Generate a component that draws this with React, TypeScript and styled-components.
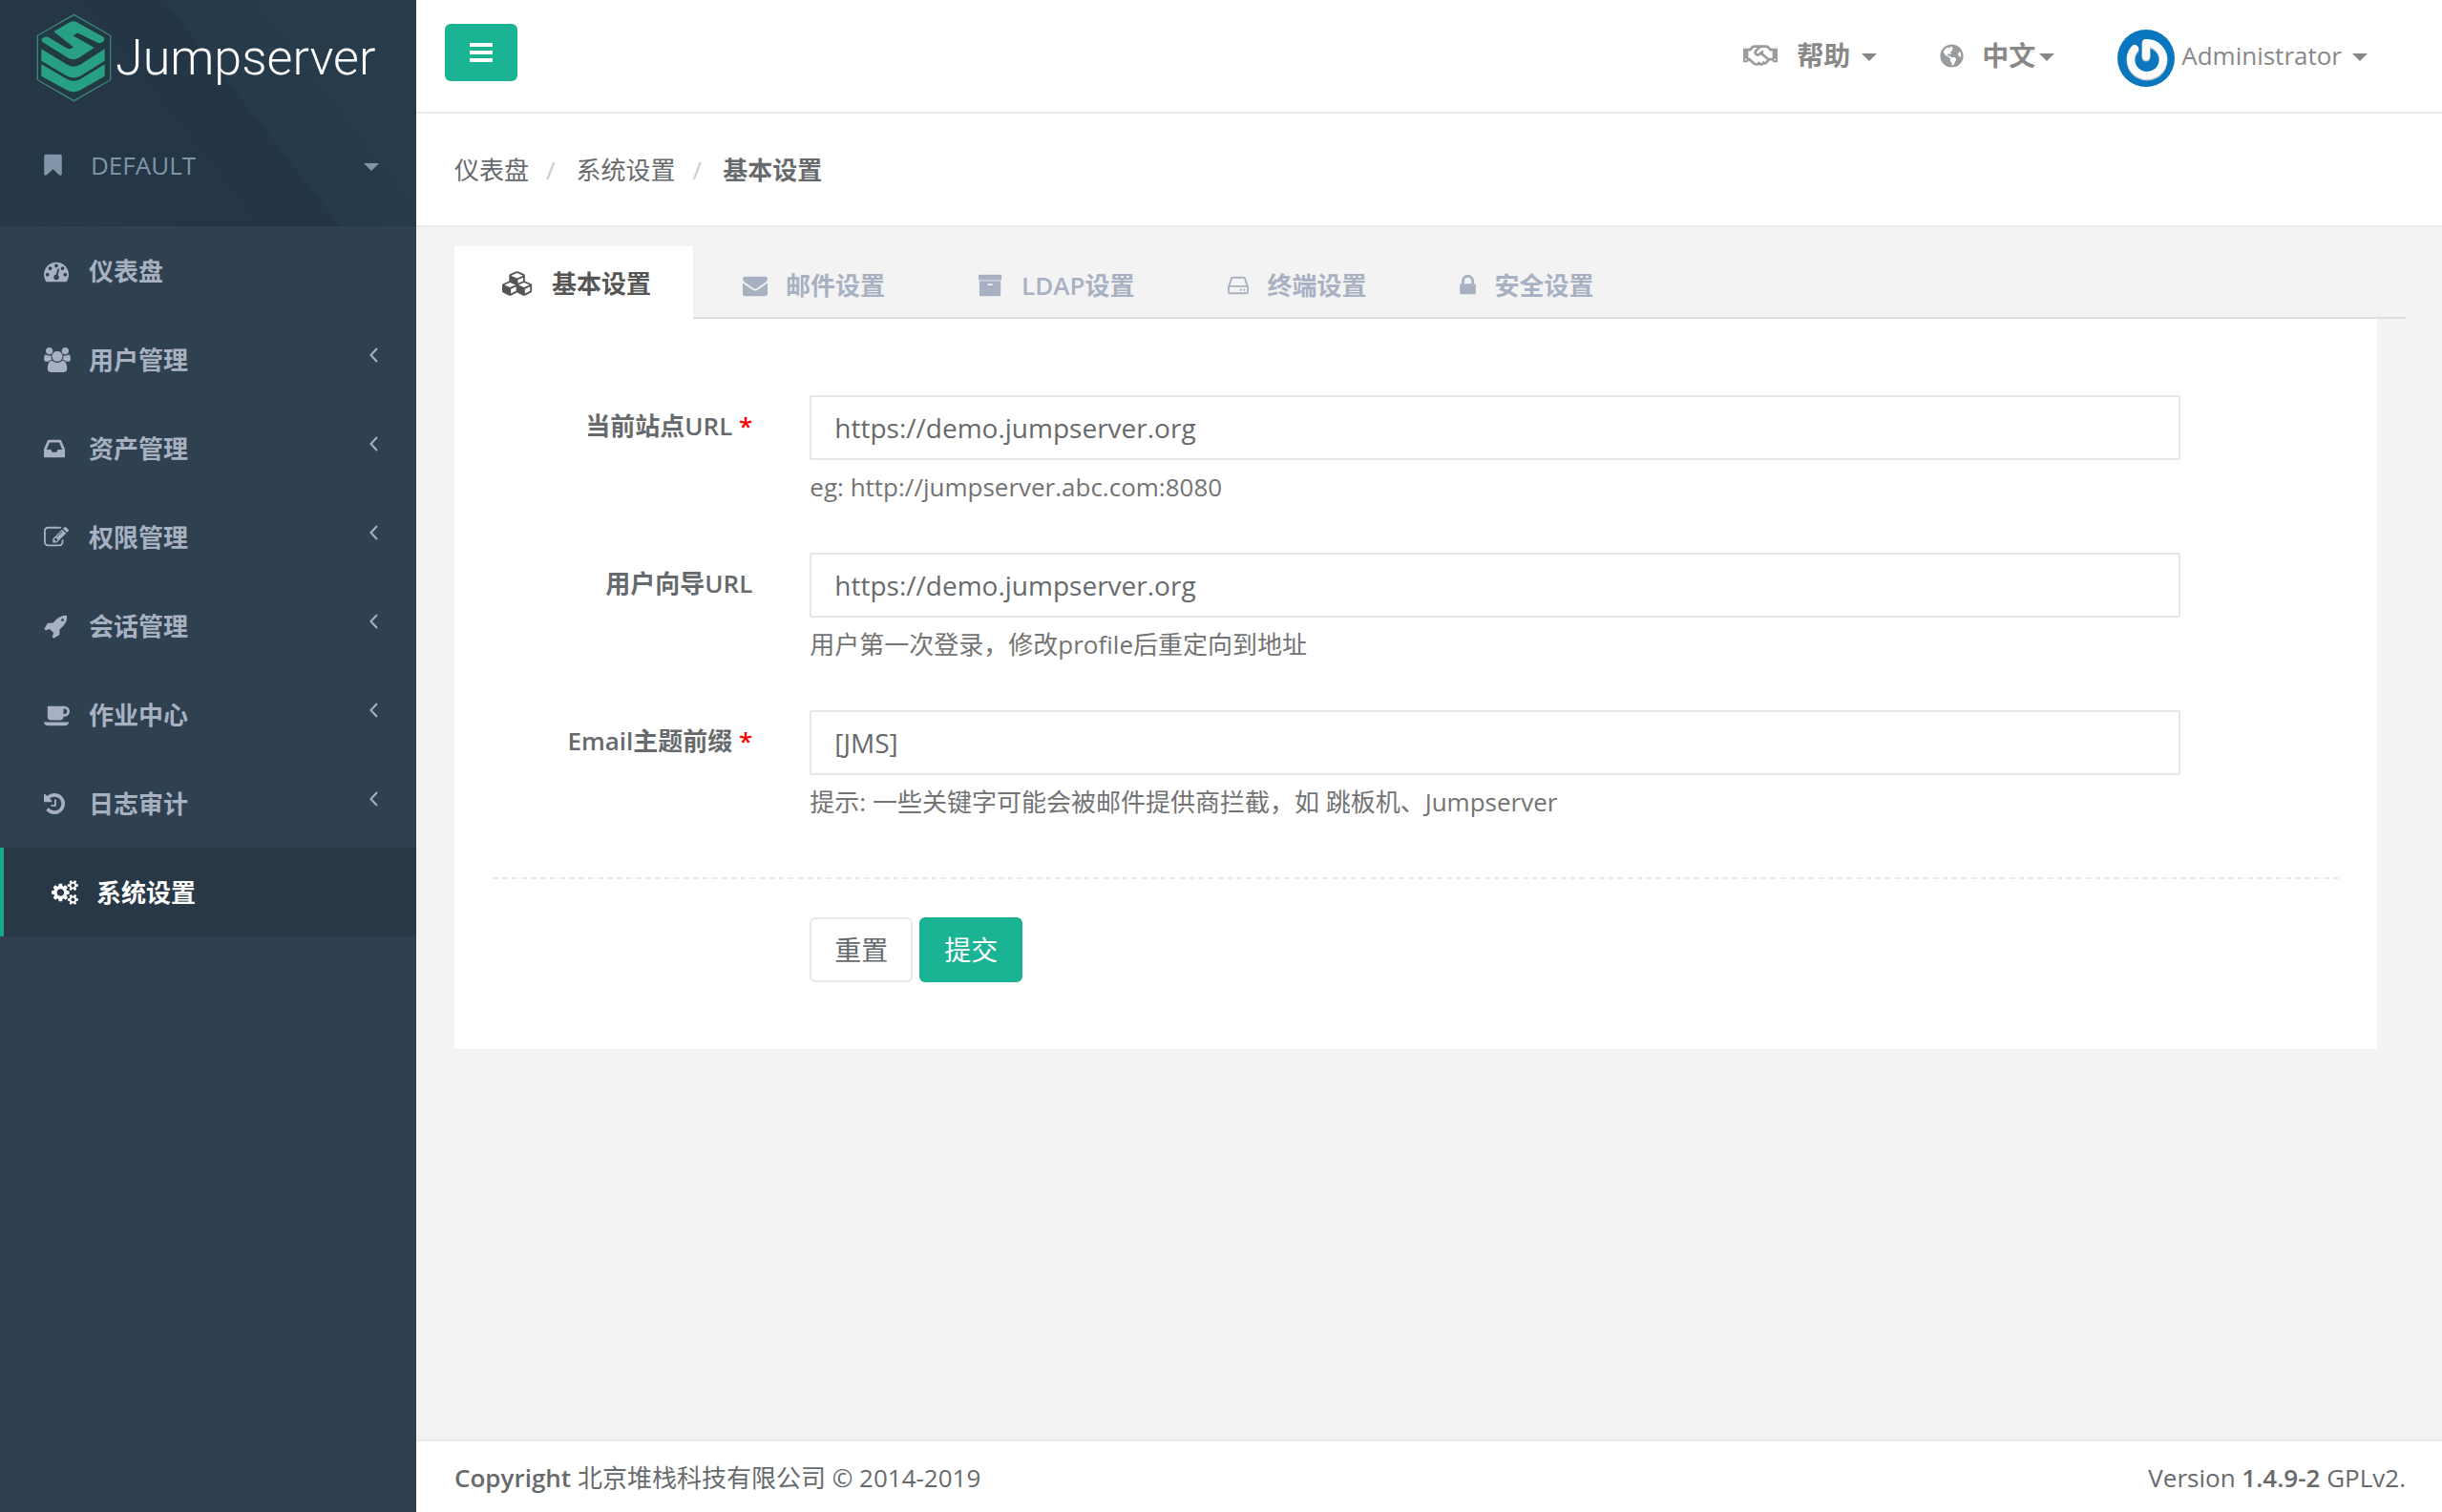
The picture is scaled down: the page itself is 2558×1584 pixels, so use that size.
import React from "react";
import styled, { createGlobalStyle } from "styled-components";
import { FaGlobeAmericas, FaRegHandshake } from "react-icons/fa";

const GlobalStyle = createGlobalStyle`
  *, *::before, *::after { box-sizing: border-box; }
  body {
    margin: 0;
    background: #2f4050;
    color: #676a6c;
    font-family: "Open Sans", "Noto Sans CJK SC", sans-serif;
    font-size: 26px;
    line-height: 36px;
  }
  button, input { font: inherit; color: inherit; }
  button { cursor: pointer; }
  a { color: inherit; text-decoration: none; }
  svg { display: block; }
`;

/* ---------- icons ---------- */

type Glyph = { box: [number, number]; x?: number; d: string };

const glyphs: Record<string, Glyph> = {
  bookmark: {
    box: [1280, 1792], x: 256,
    d: "M1420 128q23 0 44 9 33 13 52.5 41t19.5 62v1289q0 34-19.5 62t-52.5 41q-19 8-44 8-48 0-83-32l-441-424-441 424q-36 33-83 33-23 0-44-9-33-13-52.5-41t-19.5-62v-1289q0-34 19.5-62t52.5-41q21-9 44-9h1048z",
  },
  dashboard: {
    box: [1792, 1792],
    d: "M384 1152q0-53-37.5-90.5t-90.5-37.5-90.5 37.5-37.5 90.5 37.5 90.5 90.5 37.5 90.5-37.5 37.5-90.5zm192-448q0-53-37.5-90.5t-90.5-37.5-90.5 37.5-37.5 90.5 37.5 90.5 90.5 37.5 90.5-37.5 37.5-90.5zm428 481l101-382q6-26-7.5-48.5t-38.5-29.5-48 6.5-30 39.5l-101 382q-60 5-107 43.5t-63 98.5q-20 77 20 146t117 89 146-20 89-117q16-60-6-117t-72-91zm660-33q0-53-37.5-90.5t-90.5-37.5-90.5 37.5-37.5 90.5 37.5 90.5 90.5 37.5 90.5-37.5 37.5-90.5zm-640-640q0-53-37.5-90.5t-90.5-37.5-90.5 37.5-37.5 90.5 37.5 90.5 90.5 37.5 90.5-37.5 37.5-90.5zm448 192q0-53-37.5-90.5t-90.5-37.5-90.5 37.5-37.5 90.5 37.5 90.5 90.5 37.5 90.5-37.5 37.5-90.5zm320 448q0 261-141 483-19 29-54 29h-1402q-35 0-54-29-141-221-141-483 0-182 71-348t191-286 286-191 348-71 348 71 286 191 191 286 71 348z",
  },
  group: {
    box: [1920, 1792], x: -64,
    d: "M529 896q-162 5-265 128h-134q-82 0-138-40.5t-56-118.5q0-353 124-353 6 0 43.5 21t97.5 42.5 119 21.5q67 0 133-23-5 37-5 66 0 139 81 256zm1071 637q0 120-73 189.5t-194 69.5h-874q-121 0-194-69.5t-73-189.5q0-53 3.5-103.5t14-109 26.5-108.5 43-97.5 62-81 85.5-53.5 111.5-20q10 0 43 21.5t73 48 107 48 135 21.5 135-21.5 107-48 73-48 43-21.5q61 0 111.5 20t85.5 53.5 62 81 43 97.5 26.5 108.5 14 109 3.5 103.5zm-1024-1277q0 106-75 181t-181 75-181-75-75-181 75-181 181-75 181 75 75 181zm704 384q0 159-112.5 271.5t-271.5 112.5-271.5-112.5-112.5-271.5 112.5-271.5 271.5-112.5 271.5 112.5 112.5 271.5zm576 225q0 78-56 118.5t-138 40.5h-134q-103-123-265-128 81-117 81-256 0-29-5-66 66 23 133 23 59 0 119-21.5t97.5-42.5 43.5-21q124 0 124 353zm-128-609q0 106-75 181t-181 75-181-75-75-181 75-181 181-75 181 75 75 181z",
  },
  inbox: {
    box: [1536, 1792], x: 0,
    d: "M1023 960h316q-1-3-2.5-8.5t-2.5-7.5l-212-496h-708l-212 496q-1 3-2.5 8t-2.5 8h316l95 192h320zm513 30v482q0 26-19 45t-45 19h-1408q-26 0-45-19t-19-45v-482q0-62 25-123l238-552q10-25 36.5-42t52.5-17h832q26 0 52.5 17t36.5 42l238 552q25 61 25 123z",
  },
  edit: {
    box: [1792, 1792],
    d: "M888 1184l116-116-152-152-116 116v56h96v96h56zm440-720q-16-16-33 1l-350 350q-17 17-1 33t33-1l350-350q17-17 1-33zm80 594v190q0 119-84.5 203.5t-203.5 84.5h-832q-119 0-203.5-84.5t-84.5-203.5v-832q0-119 84.5-203.5t203.5-84.5h832q63 0 117 25 15 7 18 23 3 17-9 29l-49 49q-14 14-32 8-23-6-45-6h-832q-66 0-113 47t-47 113v832q0 66 47 113t113 47h832q66 0 113-47t47-113v-126q0-13 9-22l64-64q15-15 35-7t20 29zm-96-738l288 288-672 672h-288v-288zm444 132l-92 92-288-288 92-92q28-28 68-28t68 28l152 152q28 28 28 68t-28 68z",
  },
  rocket: {
    box: [1792, 1792],
    d: "M1440 448q0-40-28-68t-68-28-68 28-28 68 28 68 68 28 68-28 28-68zm224-288q0 249-75.5 430.5t-253.5 360.5q-81 80-195 176l-20 379q-2 16-16 26l-384 224q-7 4-16 4-12 0-23-9l-64-64q-13-14-8-32l85-276-281-281-276 85q-3 1-9 1-14 0-23-9l-64-64q-17-19-5-39l224-384q10-14 26-16l379-20q96-114 176-195 188-187 358-258t431-71q14 0 24 9.5t10 22.5z",
  },
  coffee: {
    box: [1920, 1792],
    d: "M1664 640q0-80-56-136t-136-56h-64v384h64q80 0 136-56t56-136zm-1664 768h1792q0 106-75 181t-181 75h-1280q-106 0-181-75t-75-181zm1856-768q0 159-112.5 271.5t-271.5 112.5h-64v32q0 92-66 158t-158 66h-704q-92 0-158-66t-66-158v-736q0-26 19-45t45-19h1152q159 0 271.5 112.5t112.5 271.5z",
  },
  history: {
    box: [1536, 1792],
    d: "M1536 896q0 156-61 298t-164 245-245 164-298 61q-172 0-327-72.5t-264-204.5q-7-10-6.5-22.5t8.5-20.5l137-138q10-9 25-9 16 2 23 12 73 95 179 147t225 52q104 0 198.5-40.5t163.5-109.5 109.5-163.5 40.5-198.5-40.5-198.5-109.5-163.5-163.5-109.5-198.5-40.5q-98 0-188 35.5t-160 101.5l137 138q31 30 14 69-17 40-59 40h-448q-26 0-45-19t-19-45v-448q0-42 40-59 39-17 69 14l130 129q107-101 244.5-156.5t284.5-55.5q156 0 298 61t245 164 164 245 61 298zm-640-288v448q0 14-9 23t-23 9h-320q-14 0-23-9t-9-23v-64q0-14 9-23t23-9h224v-352q0-14 9-23t23-9h64q14 0 23 9t9 23z",
  },
  cogs: {
    box: [1920, 1792],
    d: "M896 896q0-106-75-181t-181-75-181 75-75 181 75 181 181 75 181-75 75-181zm768 512q0-52-38-90t-90-38-90 38-38 90q0 53 37.5 90.5t90.5 37.5 90.5-37.5 37.5-90.5zm0-1024q0-52-38-90t-90-38-90 38-38 90q0 53 37.5 90.5t90.5 37.5 90.5-37.5 37.5-90.5zm-384 421v185q0 10-7 19.5t-16 10.5l-155 24q-11 35-32 76 34 48 90 115 7 11 7 20 0 12-7 19-23 30-82.5 89.5t-78.5 59.5q-11 0-21-7l-115-90q-37 19-77 31-11 108-23 155-7 24-30 24h-186q-11 0-20-7.5t-10-17.5l-23-153q-34-10-75-31l-118 89q-7 7-20 7-11 0-21-8-144-133-144-160 0-9 7-19 10-14 41-53t47-61q-23-44-35-82l-152-24q-10-1-17-9.5t-7-19.5v-185q0-10 7-19.5t16-10.5l155-24q11-35 32-76-34-48-90-115-7-11-7-20 0-12 7-20 22-30 82-89t79-59q11 0 21 7l115 90q34-18 77-32 11-108 23-154 7-24 30-24h186q11 0 20 7.5t10 17.5l23 153q34 10 75 31l118-89q8-7 20-7 11 0 21 8 144 133 144 160 0 8-7 19-12 16-42 54t-45 60q23 48 34 82l152 23q10 2 17 10.5t7 19.5zm640 533v140q0 16-149 31-12 27-30 52 51 113 51 138 0 4-4 7-122 71-124 71-8 0-46-47t-52-68q-20 2-30 2t-30-2q-14 21-52 68t-46 47q-2 0-124-71-4-3-4-7 0-25 51-138-18-25-30-52-149-15-149-31v-140q0-16 149-31 13-29 30-52-51-113-51-138 0-4 4-7 4-2 35-20t59-34 30-16q8 0 46 46.5t52 67.5q20-2 30-2t30 2q51-71 92-112l6-2q4 0 124 70 4 3 4 7 0 25-51 138 17 23 30 52 149 15 149 31zm0-1024v140q0 16-149 31-12 27-30 52 51 113 51 138 0 4-4 7-122 71-124 71-8 0-46-47t-52-68q-20 2-30 2t-30-2q-14 21-52 68t-46 47q-2 0-124-71-4-3-4-7 0-25 51-138-18-25-30-52-149-15-149-31v-140q0-16 149-31 13-29 30-52-51-113-51-138 0-4 4-7 4-2 35-20t59-34 30-16q8 0 46 46.5t52 67.5q20-2 30-2t30 2q51-71 92-112l6-2q4 0 124 70 4 3 4 7 0 25-51 138 17 23 30 52 149 15 149 31z",
  },
  cubes: {
    box: [2304, 1792],
    d: "M640 1632l384-192v-314l-384 164v342zm-64-454l404-173-404-173-404 173zm1088 454l384-192v-314l-384 164v342zm-64-454l404-173-404-173-404 173zm-448-293l384-165v-266l-384 164v267zm-64-379l441-189-441-189-441 189zm1088 518v416q0 36-19 67t-52 47l-448 224q-25 14-57 14t-57-14l-448-224q-4-2-7-4-2 2-7 4l-448 224q-25 14-57 14t-57-14l-448-224q-33-16-52-47t-19-67v-416q0-38 21.5-70t56.5-48l434-186v-400q0-38 21.5-70t56.5-48l448-192q23-10 50-10t50 10l448 192q35 16 56.5 48t21.5 70v400l434 186q36 16 57 48t21 70z",
  },
  envelope: {
    box: [1792, 1792],
    d: "M1792 710v794q0 66-47 113t-113 47h-1472q-66 0-113-47t-47-113v-794q44 49 101 87 362 246 497 345 57 42 92.5 65.5t94.5 48 110 24.5h2q51 0 110-24.5t94.5-48 92.5-65.5q170-123 498-345 57-39 100-87zm0-294q0 79-49 151t-122 123q-376 261-468 325-10 7-42.5 31t-54 38.5-52 32.5-57.5 27-50 9h-2q-23 0-50-9t-57.5-27-52-32.5-54-38.5-42.5-31q-91-64-262-182.5t-205-142.5q-62-42-117-115.5t-55-136.5q0-78 41.5-130t118.5-52h1472q65 0 112.5 47t47.5 113z",
  },
  archive: {
    box: [1792, 1792], x: 64,
    d: "M1088 832q0-26-19-45t-45-19h-256q-26 0-45 19t-19 45 19 45 45 19h256q26 0 45-19t19-45zm576-192v960q0 26-19 45t-45 19h-1408q-26 0-45-19t-19-45v-960q0-26 19-45t45-19h1408q26 0 45 19t19 45zm64-448v256q0 26-19 45t-45 19h-1536q-26 0-45-19t-19-45v-256q0-26 19-45t45-19h1536q26 0 45 19t19 45z",
  },
  disk: {
    box: [1536, 1792], x: 128,
    d: "M1168 1216q0 33-23.5 56.5t-56.5 23.5-56.5-23.5-23.5-56.5 23.5-56.5 56.5-23.5 56.5 23.5 23.5 56.5zm256 0q0 33-23.5 56.5t-56.5 23.5-56.5-23.5-23.5-56.5 23.5-56.5 56.5-23.5 56.5 23.5 23.5 56.5zm112 160v-320q0-13-9.5-22.5t-22.5-9.5h-1216q-13 0-22.5 9.5t-9.5 22.5v320q0 13 9.5 22.5t22.5 9.5h1216q13 0 22.5-9.5t9.5-22.5zm-1230-480h1180l-157-482q-4-13-16-21.5t-26-8.5h-782q-14 0-26 8.5t-16 21.5zm1358 160v320q0 66-47 113t-113 47h-1216q-66 0-113-47t-47-113v-320q0-25 16-75l197-606q17-53 63-86t101-33h782q55 0 101 33t63 86l197 606q16 50 16 75z",
  },
  lock: {
    box: [1152, 1792], x: 320,
    d: "M640 768h512v-192q0-106-75-181t-181-75-181 75-75 181v192zm832 96v576q0 40-28 68t-68 28h-960q-40 0-68-28t-28-68v-576q0-40 28-68t68-28h32v-192q0-184 132-316t316-132 316 132 132 316v192h32q40 0 68 28t28 68z",
  },
};

const EM = 26;

function Icon({ name }: { name: string }) {
  const { box, x = 0, d } = glyphs[name];
  return (
    <svg
      width={Math.round((box[0] / 1792) * EM)}
      height={EM}
      viewBox={`${x} 0 ${box[0]} ${box[1]}`}
      fill="currentColor"
      overflow="visible"
      aria-hidden="true"
    >
      <path d={d} />
    </svg>
  );
}

function Chevron() {
  return (
    <svg width="9" height="16" viewBox="0 0 9 16" fill="none" stroke="currentColor" strokeWidth="2" aria-hidden="true">
      <path d="M8 1L1.5 8L8 15" />
    </svg>
  );
}

function LogoMark() {
  return (
    <svg width="79" height="93" viewBox="22 18 238 280" aria-hidden="true">
      <path d="M141 22L256 88V228L141 294L26 228V88Z" fill="#20403f" fillOpacity="0.45" stroke="#3f8583" strokeWidth="4" />
      <g fill="#28a083">
        <path d="M77 75L128 46Q139 40 150 46L232 92Q242 100 233 107Q224 115 214 110L152 80L138 88L205 126L158 157Q139 170 120 157L42 108Q35 102 42 96Q52 90 60 93L118 128Q130 134 139 124Z" />
        <path d="M38 130L118 179Q140 192 162 179L238 130V168L162 215Q140 228 118 215L38 168Z" />
        <path d="M38 178L118 225Q140 238 162 225L238 178V216L162 260Q140 272 118 260L38 216Z" />
      </g>
    </svg>
  );
}

const AvatarArt = styled.svg`
  margin-top: 6px;
`;

function Avatar() {
  return (
    <AvatarArt width="60" height="60" viewBox="-30 -30 60 60" aria-hidden="true">
      <circle r="30" fill="#0a76bd" />
      <g fill="none" strokeLinecap="round" strokeLinejoin="round">
        <path d="M-12 -10A17 17 0 1 0 0 -16V-2" stroke="#c3ccd3" strokeWidth="9" transform="translate(0 1)" />
        <path d="M-12 -10A17 17 0 1 0 0 -16V-2" stroke="#fbfbfb" strokeWidth="8" />
      </g>
    </AvatarArt>
  );
}

const Caret = styled.span`
  margin-top: 4px;
  border: 8px solid transparent;
  border-top-color: currentColor;
  border-bottom-width: 0;
`;

/* ---------- shell ---------- */

const Shell = styled.div`
  display: grid;
  grid-template-columns: 436px minmax(0, 1fr);
  min-height: 100vh;
`;

const Sidebar = styled.aside`
  background: #2f4050;
`;

const SidebarHead = styled.div`
  height: 237px;
  padding-top: 14px;
  color: #8095a8;
  background: linear-gradient(52deg, #263848 0%, #243546 57%, #273a4a 58%, #293c4c 100%);
`;

const Brand = styled.a`
  display: flex;
  align-items: center;
  gap: 4px;
  height: 93px;
  padding-left: 38px;
`;

const BrandName = styled.span`
  font: 300 52px/60px Roboto, sans-serif;
  color: #fff;
`;

const OrgButton = styled.button`
  display: flex;
  align-items: center;
  width: 100%;
  height: 36px;
  margin-top: 48px;
  padding: 0 39px 0 46px;
  border: 0;
  background: none;
  text-align: left;
`;

const OrgName = styled.span`
  flex: 1;
  margin-left: 30px;
`;

const NavLink = styled.a<{ $active?: boolean }>`
  display: flex;
  align-items: center;
  height: 93px;
  padding: 0 40px 0 ${(p) => (p.$active ? 50 : 46)}px;
  border-left: ${(p) => (p.$active ? "4px solid #19aa8d" : "0")};
  background: ${(p) => (p.$active ? "#293846" : "none")};
  color: ${(p) => (p.$active ? "#fff" : "#a7b1c2")};
  font-weight: 700;
`;

const NavIcon = styled.span`
  width: 47px;
`;

const NavText = styled.span`
  flex: 1;
`;

const NavArrow = styled.span`
  padding-bottom: 10px;
`;

const Page = styled.div`
  display: flex;
  flex-direction: column;
  background: #f3f3f4;
`;

/* ---------- top bar ---------- */

const TopBar = styled.header`
  display: flex;
  justify-content: space-between;
  height: 119px;
  padding: 25px 78px 0 30px;
  background: #fff;
  border-bottom: 2px solid #e7eaec;
`;

const MenuToggle = styled.button`
  display: grid;
  place-items: center;
  width: 76px;
  height: 60px;
  border: 0;
  border-radius: 6px;
  background: #1ab394;
  color: #fff;
`;

const TopMenu = styled.div`
  display: flex;
  align-items: center;
  gap: 66px;
  height: 66px;
  color: #888;
`;

const TopItem = styled.button<{ $gap: number; $bold?: boolean }>`
  display: flex;
  align-items: center;
  gap: ${(p) => p.$gap}px;
  padding: 0;
  border: 0;
  background: none;
  font-size: ${(p) => (p.$bold ? 28 : 26)}px;
  font-weight: ${(p) => (p.$bold ? 700 : 400)};
`;

const TopIcon = styled.span<{ $space: number }>`
  margin-right: ${(p) => p.$space}px;
  color: #999c9e;
`;

const UserName = styled.span`
  margin-right: 4px;
`;

/* ---------- breadcrumb ---------- */

const Breadcrumb = styled.ol`
  display: flex;
  height: 119px;
  margin: 0;
  padding: 41px 40px 0;
  list-style: none;
  background: #fff;
  border-bottom: 2px solid #e7eaec;
`;

const Crumb = styled.li<{ $current?: boolean }>`
  font-weight: ${(p) => (p.$current ? 700 : 400)};

  &:not(:first-child)::before {
    content: "/";
    margin: 0 22px 0 18px;
    color: #ccc;
    font-weight: 400;
  }
`;

/* ---------- tabs and form ---------- */

const Content = styled.main`
  flex: 1;
  padding: 20px 38px 0 40px;
`;

const Tabs = styled.div`
  display: flex;
  gap: 2px;
  border-bottom: 2px solid #ddd;
`;

const Tab = styled.button<{ $active?: boolean }>`
  display: flex;
  align-items: center;
  gap: 19px;
  height: ${(p) => (p.$active ? 76 : 74)}px;
  margin-bottom: ${(p) => (p.$active ? -2 : 0)}px;
  padding: ${(p) => (p.$active ? "2px 44px 0 50px" : "8px 46px 0 50px")};
  border: 0;
  background: ${(p) => (p.$active ? "#fff" : "none")};
  color: ${(p) => (p.$active ? "#555" : "#a7b1c2")};
  font-weight: 700;
`;

const Latin = styled.span`
  font-weight: 600;
`;

const Panel = styled.form`
  margin-right: 30px;
  padding: 80px 10px 70px;
  background: #fff;
`;

const FormRow = styled.div`
  display: grid;
  grid-template-columns: 2fr 9fr 1fr;
`;

const Field = styled(FormRow)`
  margin-bottom: 30px;
`;

const FieldLabel = styled.label`
  padding: 14px 30px 0;
  text-align: right;
  font-weight: 700;
`;

const Required = styled.span`
  color: #f00;
  font-weight: 600;
`;

const Control = styled.div`
  padding: 0 30px;
`;

const TextInput = styled.input`
  display: block;
  width: 100%;
  height: 68px;
  padding: 0 24px;
  border: 2px solid #e5e6e7;
  border-radius: 2px;
  background: #fff;
  font-size: 28px;
`;

const Help = styled.p`
  margin: 10px 0 0;
  padding-bottom: 21px;
  color: #737373;
`;

const Divider = styled.hr`
  margin: 40px 30px;
  border: 0;
  border-top: 2px dashed #e7eaec;
`;

const Actions = styled.div`
  display: flex;
  gap: 7px;
  grid-column: 2;
  padding: 0 30px;
`;

const ActionButton = styled.button<{ $primary?: boolean }>`
  height: 68px;
  padding: 0 24px;
  border: 2px solid ${(p) => (p.$primary ? "#1ab394" : "#e7eaec")};
  border-radius: 6px;
  background: ${(p) => (p.$primary ? "#1ab394" : "#fff")};
  color: ${(p) => (p.$primary ? "#fff" : "#676a6c")};
  font-size: 28px;
`;

const Footer = styled.footer`
  display: flex;
  justify-content: space-between;
  height: 76px;
  padding: 20px 38px 0 40px;
  background: #fff;
  border-top: 2px solid #e7eaec;
`;

const Strong = styled.strong`
  font-weight: 600;
`;

/* ---------- data ---------- */

const navItems = [
  { icon: "dashboard", label: "仪表盘" },
  { icon: "group", label: "用户管理", sub: true },
  { icon: "inbox", label: "资产管理", sub: true },
  { icon: "edit", label: "权限管理", sub: true },
  { icon: "rocket", label: "会话管理", sub: true },
  { icon: "coffee", label: "作业中心", sub: true },
  { icon: "history", label: "日志审计", sub: true },
  { icon: "cogs", label: "系统设置", active: true },
];

const tabs = [
  { icon: "cubes", label: "基本设置", active: true },
  { icon: "envelope", label: "邮件设置" },
  { icon: "archive", latin: "LDAP", label: "设置" },
  { icon: "disk", label: "终端设置" },
  { icon: "lock", label: "安全设置" },
];

const fields = [
  {
    id: "site-url",
    label: <>当前站点<Latin>URL</Latin></>,
    required: true,
    value: "https://demo.jumpserver.org",
    help: "eg: http://jumpserver.abc.com:8080",
  },
  {
    id: "guide-url",
    label: <>用户向导<Latin>URL</Latin></>,
    value: "https://demo.jumpserver.org",
    help: "用户第一次登录，修改profile后重定向到地址",
  },
  {
    id: "email-prefix",
    label: <><Latin>Email</Latin>主题前缀</>,
    required: true,
    value: "[JMS]",
    help: "提示: 一些关键字可能会被邮件提供商拦截，如 跳板机、Jumpserver",
  },
];

export default function App() {
  return (
    <>
      <GlobalStyle />
      <Shell>
        <Sidebar>
          <SidebarHead>
            <Brand href="#">
              <LogoMark />
              <BrandName>Jumpserver</BrandName>
            </Brand>
            <OrgButton type="button">
              <Icon name="bookmark" />
              <OrgName>DEFAULT</OrgName>
              <Caret />
            </OrgButton>
          </SidebarHead>
          <nav>
            {navItems.map((item) => (
              <NavLink key={item.label} href="#" $active={item.active}>
                <NavIcon><Icon name={item.icon} /></NavIcon>
                <NavText>{item.label}</NavText>
                {item.sub && <NavArrow><Chevron /></NavArrow>}
              </NavLink>
            ))}
          </nav>
        </Sidebar>

        <Page>
          <TopBar>
            <MenuToggle type="button" aria-label="Menu">
              <svg width="24" height="20" viewBox="0 0 24 20" fill="currentColor" aria-hidden="true">
                <path d="M0 0h24v4H0zM0 8h24v4H0zM0 16h24v4H0z" />
              </svg>
            </MenuToggle>
            <TopMenu>
              <TopItem type="button" $gap={12} $bold>
                <TopIcon $space={8}><FaRegHandshake size={36} /></TopIcon>
                帮助
                <Caret />
              </TopItem>
              <TopItem type="button" $gap={4} $bold>
                <TopIcon $space={15}><FaGlobeAmericas size={25} /></TopIcon>
                中文
                <Caret />
              </TopItem>
              <TopItem type="button" $gap={7}>
                <Avatar />
                <UserName>Administrator</UserName>
                <Caret />
              </TopItem>
            </TopMenu>
          </TopBar>

          <Breadcrumb>
            <Crumb><a href="#">仪表盘</a></Crumb>
            <Crumb><a href="#">系统设置</a></Crumb>
            <Crumb $current>基本设置</Crumb>
          </Breadcrumb>

          <Content>
            <Tabs role="tablist">
              {tabs.map((tab) => (
                <Tab key={tab.icon} type="button" role="tab" aria-selected={!!tab.active} $active={tab.active}>
                  <Icon name={tab.icon} />
                  <span>
                    {tab.latin && <Latin>{tab.latin}</Latin>}
                    {tab.label}
                  </span>
                </Tab>
              ))}
            </Tabs>
            <Panel>
              {fields.map((field) => (
                <Field key={field.id}>
                  <FieldLabel htmlFor={field.id}>
                    {field.label}
                    {field.required && <Required> *</Required>}
                  </FieldLabel>
                  <Control>
                    <TextInput id={field.id} type="text" defaultValue={field.value} />
                    <Help>{field.help}</Help>
                  </Control>
                </Field>
              ))}
              <Divider />
              <FormRow>
                <Actions>
                  <ActionButton type="reset">重置</ActionButton>
                  <ActionButton type="submit" $primary>提交</ActionButton>
                </Actions>
              </FormRow>
            </Panel>
          </Content>

          <Footer>
            <div><Strong>Copyright</Strong> 北京堆栈科技有限公司 © 2014-2019</div>
            <div>Version <Strong>1.4.9-2</Strong> GPLv2.</div>
          </Footer>
        </Page>
      </Shell>
    </>
  );
}
